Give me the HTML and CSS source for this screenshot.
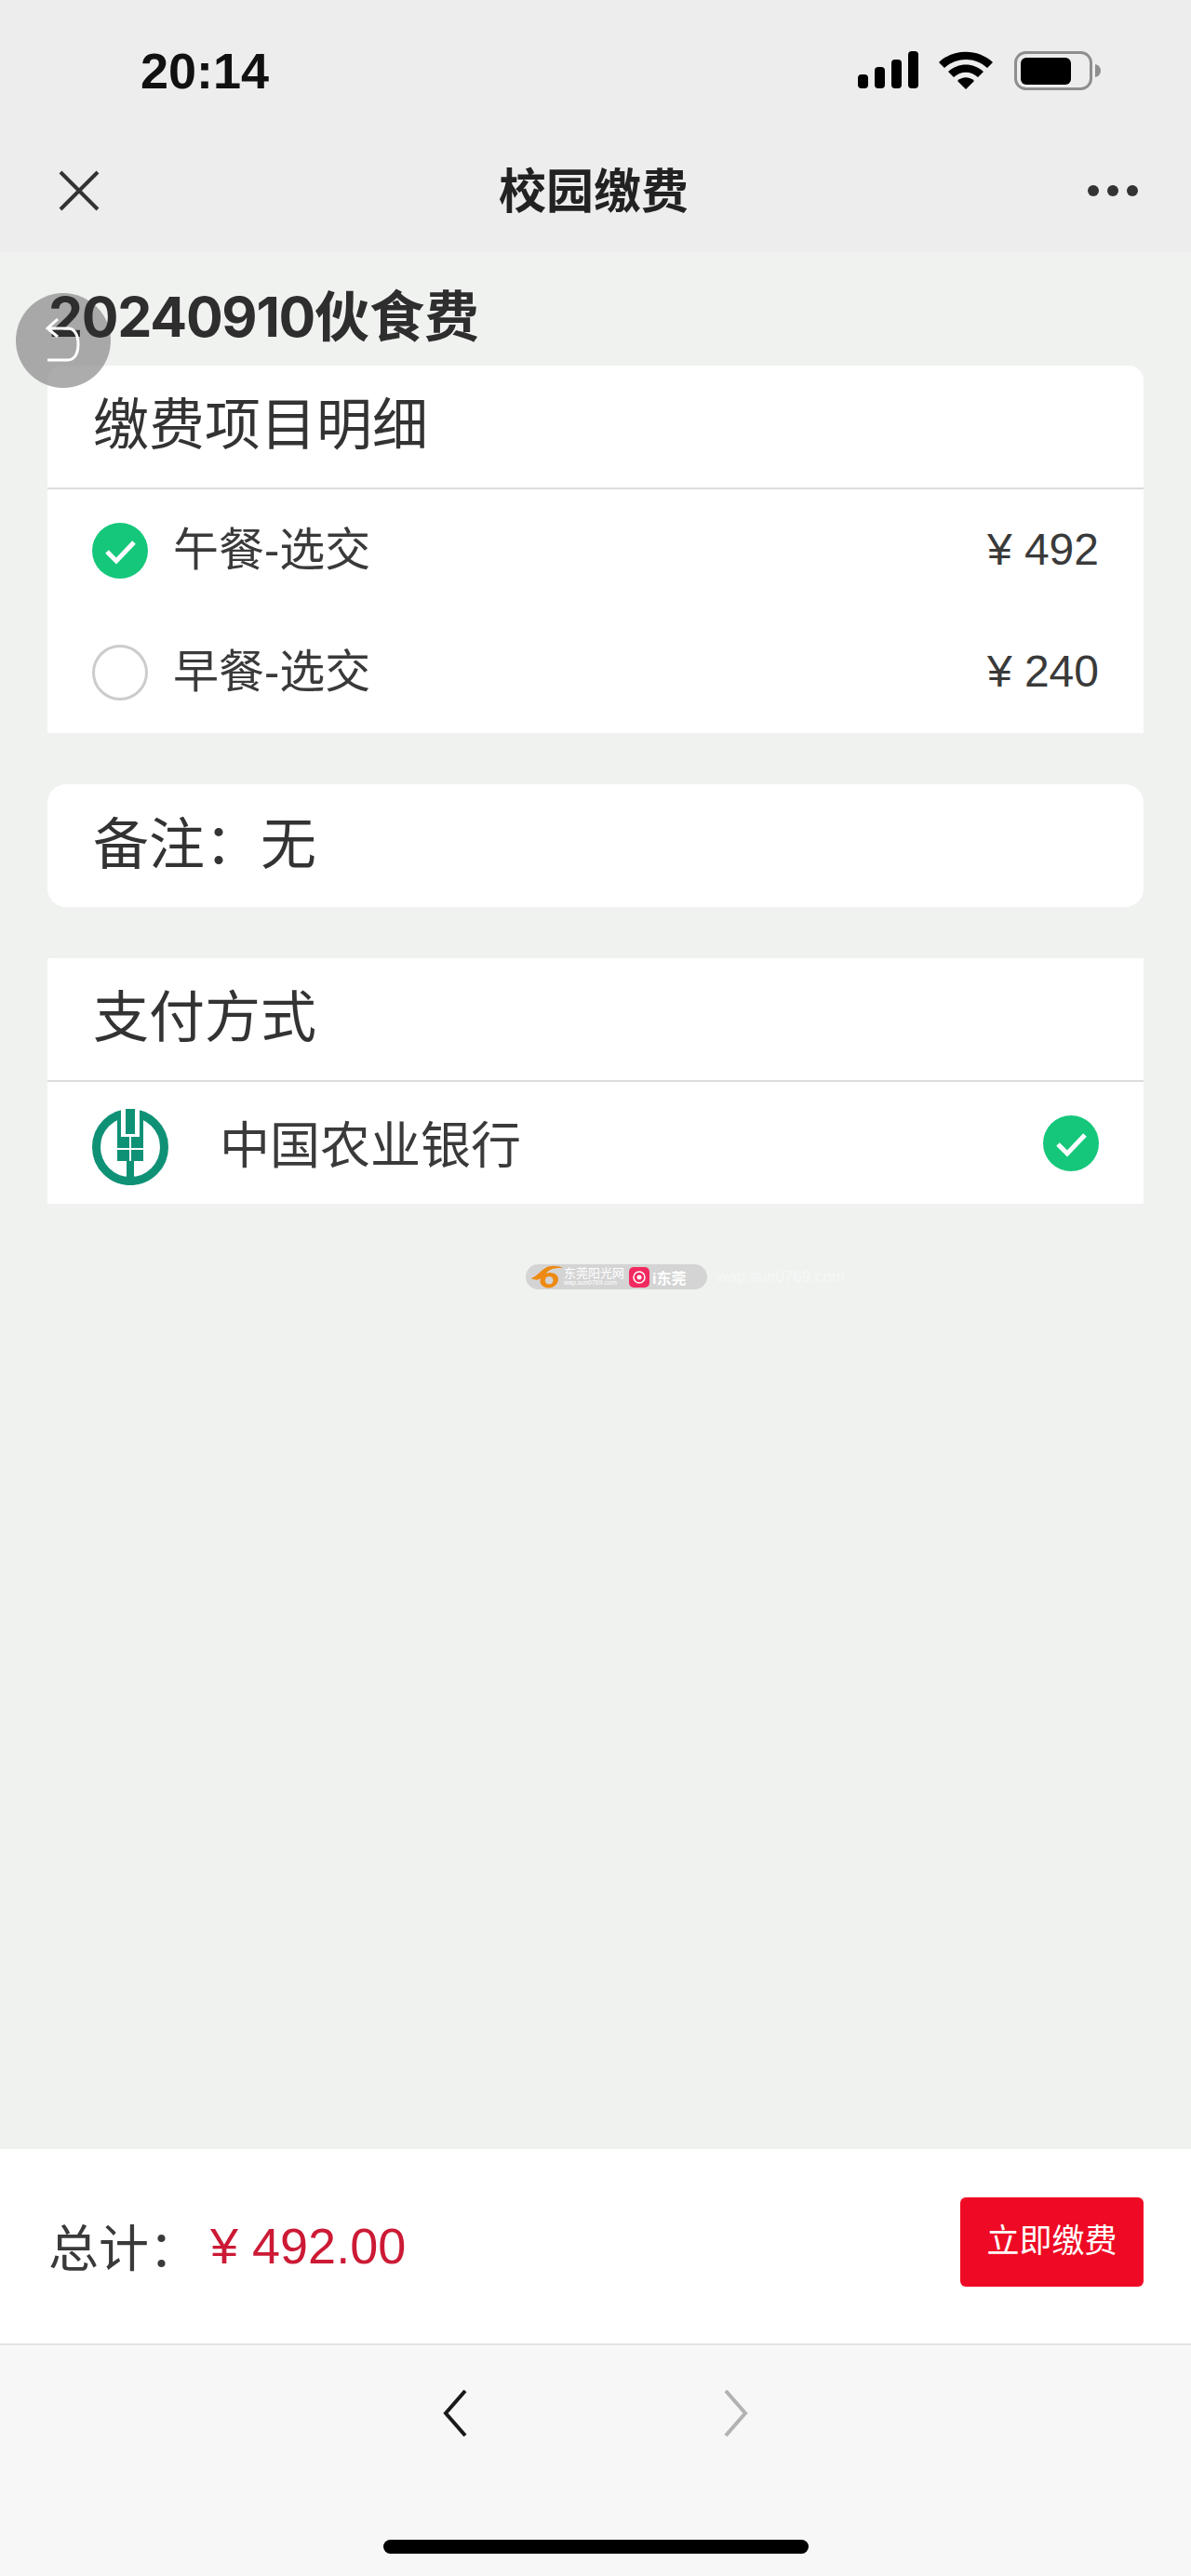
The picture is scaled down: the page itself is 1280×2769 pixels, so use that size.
FILE: index.html
```html
<!DOCTYPE html>
<html lang="zh-CN">
  <head>
    <meta charset="UTF-8" />
    <meta name="viewport" content="width=device-width, initial-scale=1.0" />
    <title>校园缴费</title>
    <link rel="stylesheet" href="styles.css">
  </head>
  <body>
    <div class="page">
      <header class="top">
        <div class="status-bar">
          <span class="time">20:14</span>
          <svg class="status-icons" width="261" height="42" viewBox="0 0 261 42">
            <rect x="0" y="25" width="11" height="15" rx="4" />
            <rect x="18" y="17" width="11" height="23" rx="4" />
            <rect x="36" y="9" width="11" height="31" rx="4" />
            <rect x="54" y="0" width="11" height="40" rx="4" />
            <path d="M87 12 C103 -3 129 -3 145 12 L139 18 C126 6 106 6 93 18 Z" />
            <path d="M97 22 C108 12 124 12 135 22 L129 28 C121 21 111 21 103 28 Z" />
            <path d="M107 32 C112 27 120 27 125 32 L116 41 Z" />
            <rect x="169.500" y="1.500" width="81" height="39" rx="11" fill="none" stroke="#8e8e8e" stroke-width="3" />
            <rect x="175" y="7" width="54" height="29" rx="6" />
            <path d="M255 14 C259 15 261 18 261 21 C261 24 259 27 255 28 Z" fill="#8e8e8e" />
          </svg>
        </div>
        <div class="nav-bar">
          <svg class="close-icon" width="44" height="44" viewBox="0 0 44 44">
            <path d="M2 2 L42 42 M42 2 L2 42" />
          </svg>
          <span class="nav-title">校园缴费</span>
          <div class="more-dots"><i></i><i></i><i></i></div>
        </div>
      </header>

      <main class="content">
        <h1 class="pay-title"><span class="pay-no">20240910</span>伙食费</h1>

        <section class="card card-top">
          <div class="card-head">缴费项目明细</div>
          <div class="item-row">
            <svg class="check" width="60" height="60" viewBox="0 0 60 60">
              <circle cx="30" cy="30" r="30" fill="#15c77b" />
              <path d="M16 31 L26 41 L45 21" />
            </svg>
            <span class="item-name">午餐-选交</span>
            <span class="item-price">¥ 492</span>
          </div>
          <div class="item-row">
            <span class="radio"></span>
            <span class="item-name">早餐-选交</span>
            <span class="item-price">¥ 240</span>
          </div>
        </section>

        <section class="card card-round">
          <div class="card-head no-line">备注：无</div>
        </section>

        <section class="card">
          <div class="card-head">支付方式</div>
          <div class="bank-row">
            <svg class="bank-logo" width="82" height="82" viewBox="0 0 82 82">
              <circle cx="41" cy="41" r="36.500" fill="none" stroke="#0f9176" stroke-width="9" />
              <rect x="31" y="0" width="20" height="30" fill="#fff" />
              <rect x="36" y="0" width="10" height="27" fill="#0f9176" />
              <rect x="27" y="3" width="4" height="28" fill="#0f9176" />
              <rect x="51" y="3" width="4" height="28" fill="#0f9176" />
              <rect x="27" y="30" width="13" height="12" fill="#0f9176" />
              <rect x="42" y="30" width="13" height="12" fill="#0f9176" />
              <rect x="27" y="44" width="13" height="12" fill="#0f9176" />
              <rect x="42" y="44" width="13" height="12" fill="#0f9176" />
              <rect x="37" y="56" width="8" height="26" fill="#0f9176" />
            </svg>
            <span class="bank-name">中国农业银行</span>
            <svg class="check" width="60" height="60" viewBox="0 0 60 60">
              <circle cx="30" cy="30" r="30" fill="#15c77b" />
              <path d="M16 31 L26 41 L45 21" />
            </svg>
          </div>
        </section>

        <div class="watermark">
          <div class="mark-pill">
            <svg width="36" height="26" viewBox="0 0 32 24">
              <path d="M0 13 C6 11 9 6 14 3 C19 0 26 0 32 3 C24 2 18 4 15 8 C21 6 28 9 27 15 C26 21 19 24 14 22 C9 20 8 16 10 13 C7 15 4 15 0 13 Z" fill="#ee8a12" />
              <circle cx="18" cy="15" r="4" fill="#d4d4d4" />
            </svg>
            <span class="mark-site">东莞阳光网<small>wap.sun0769.com</small></span>
            <svg class="mark-app" width="22" height="22" viewBox="0 0 22 22">
              <rect width="22" height="22" rx="5" fill="#f2295f" />
              <circle cx="11" cy="11" r="6" fill="none" stroke="#fff" stroke-width="1.500" />
              <circle cx="11" cy="11" r="2.500" fill="#fff" />
            </svg>
            <span class="mark-name">i东莞</span>
          </div>
          <span class="mark-faint">wap.sun0769.com</span>
        </div>
      </main>

      <div class="pay-bar">
        <div class="total">
          <span class="total-label">总计：</span>
          <span class="total-num">¥ 492.00</span>
        </div>
        <button class="pay-button">立即缴费</button>
      </div>

      <footer class="browser-bar">
        <div class="browser-arrows">
          <svg width="26" height="50" viewBox="0 0 26 50">
            <path d="M24 1 L3 25 L24 49" fill="none" stroke="#1a1a1a" stroke-width="4" />
          </svg>
          <svg width="26" height="50" viewBox="0 0 26 50">
            <path d="M2 1 L23 25 L2 49" fill="none" stroke="#b2b2b2" stroke-width="4" />
          </svg>
        </div>
        <div class="home-bar"></div>
      </footer>

      <div class="float-ball"></div>
      <svg class="float-arrow" width="40" height="50" viewBox="0 0 40 50">
        <path d="M13 1 L2 11 L13 20 M2 11 H24 C31 11 35 18 35 28 C35 38 31 45 24 45 H2" />
      </svg>
    </div>
  </body>
</html>
```

FILE: styles.css
```css
* {
  box-sizing: border-box;
}
body {
  margin: 0;
  padding: 0;
  font-family: "Liberation Sans", "Noto Sans CJK SC", sans-serif;
  background-color: #f0f2f0;
  color: #333;
}
.page {
  position: relative;
  display: flex;
  flex-direction: column;
  height: 2769px;
  overflow: hidden;
}

/* top bars */
.top {
  height: 271px;
  background-color: #ededed;
}
.status-bar {
  display: flex;
  justify-content: space-between;
  align-items: center;
  height: 152px;
  padding: 0 97px 0 151px;
}
.time {
  font-size: 54px;
  font-weight: 700;
  color: #111;
}
.nav-bar {
  display: flex;
  justify-content: space-between;
  align-items: center;
  height: 106px;
  padding: 0 57px 0 63px;
  position: relative;
}
.close-icon path {
  fill: none;
  stroke: #333;
  stroke-width: 4;
}
.nav-title {
  position: absolute;
  left: 0;
  right: 4px;
  padding-bottom: 6px;
  text-align: center;
  font-size: 51px;
  font-weight: 700;
  color: #222;
}
.more-dots {
  display: flex;
  gap: 9px;
}
.more-dots i {
  width: 12px;
  height: 12px;
  border-radius: 50%;
  background-color: #333;
}

/* main content */
.content {
  flex: 1;
  padding: 0 51px;
}
.pay-title {
  position: relative;
  z-index: 2;
  margin: 0;
  height: 122px;
  padding-top: 36px;
  padding-left: 1px;
  font-family: Inter, "Noto Sans CJK SC", sans-serif;
  font-size: 59px;
  line-height: 68px;
  font-weight: 700;
  white-space: nowrap;
  color: #2e2e2e;
}
.pay-no {
  letter-spacing: -1.300px;
}
.card {
  background-color: #fff;
  margin-bottom: 55px;
}
.card-top {
  border-radius: 16px 16px 0 0;
}
.card-round {
  border-radius: 20px;
}
.card-head {
  height: 133px;
  padding: 0 49px 14px;
  display: flex;
  align-items: center;
  font-size: 60px;
  color: #333;
  border-bottom: 2px solid #dcdcdc;
}
.no-line {
  border-bottom: none;
  height: 132px;
}
.item-row {
  display: flex;
  align-items: center;
  height: 131px;
  padding: 0 48px;
}
.item-name {
  margin-left: 27px;
  padding-bottom: 10px;
  font-size: 49px;
  flex: 1;
  color: #3a3a3a;
}
.item-price {
  padding-bottom: 3px;
  font-size: 48px;
  color: #3a3a3a;
}
.check path {
  fill: none;
  stroke: #fff;
  stroke-width: 5;
}
.radio {
  width: 60px;
  height: 60px;
  border: 3px solid #cccccc;
  border-radius: 50%;
}
.bank-row {
  display: flex;
  align-items: center;
  height: 131px;
  padding: 0 48px;
}
.bank-logo {
  margin-top: 8px;
}
.bank-name {
  margin-left: 55px;
  padding-bottom: 2px;
  flex: 1;
  font-size: 54px;
  color: #3a3a3a;
}

/* pasted-in watermark */
.watermark {
  display: flex;
  align-items: center;
  gap: 10px;
  margin: 65px 0 0 514px;
}
.mark-pill {
  display: flex;
  align-items: center;
  flex: none;
  width: 195px;
  height: 27px;
  padding: 0 5px;
  border-radius: 14px;
  background-color: #d4d4d4;
  color: #fff;
}
.mark-site {
  width: 72px;
  font-size: 13px;
  line-height: 13px;
  white-space: nowrap;
}
.mark-site small {
  display: block;
  font-size: 7px;
  line-height: 8px;
}
.mark-app {
  margin-left: -2px;
}
.mark-name {
  margin-left: 3px;
  font-size: 16px;
  font-weight: 700;
}
.mark-faint {
  font-size: 17px;
  color: #f6f7f6;
}

/* bottom */
.pay-bar {
  display: flex;
  justify-content: space-between;
  align-items: center;
  height: 211px;
  padding: 0 51px 0 52px;
  background-color: #fff;
  border-bottom: 2px solid #e4e4e4;
}
.total {
  display: flex;
  align-items: center;
  padding-bottom: 2px;
}
.total-label {
  font-size: 54px;
  color: #3a3a3a;
}
.total-num {
  margin-left: 12px;
  font-size: 54px;
  color: #cc1a35;
}
.pay-button {
  width: 197px;
  height: 96px;
  margin-bottom: 9px;
  padding: 0 0 9px;
  border: none;
  border-radius: 6px;
  background-color: #ee0a24;
  color: #fff;
  font-family: inherit;
  font-size: 35px;
}
.browser-bar {
  height: 248px;
  background-color: #f7f7f7;
  display: flex;
  flex-direction: column;
  align-items: center;
}
.browser-arrows {
  display: flex;
  gap: 276px;
  margin-top: 48px;
}
.home-bar {
  width: 457px;
  height: 15px;
  margin-top: 111px;
  border-radius: 8px;
  background-color: #000;
}

/* floating back button over the page */
.float-ball {
  position: absolute;
  left: 17px;
  top: 315px;
  width: 102px;
  height: 102px;
  border-radius: 50%;
  background-color: rgba(128, 128, 128, 0.65);
  z-index: 1;
}
.float-arrow {
  position: absolute;
  left: 49px;
  top: 342px;
  z-index: 3;
}
.float-arrow path {
  fill: none;
  stroke: #fff;
  stroke-width: 3;
}
```
